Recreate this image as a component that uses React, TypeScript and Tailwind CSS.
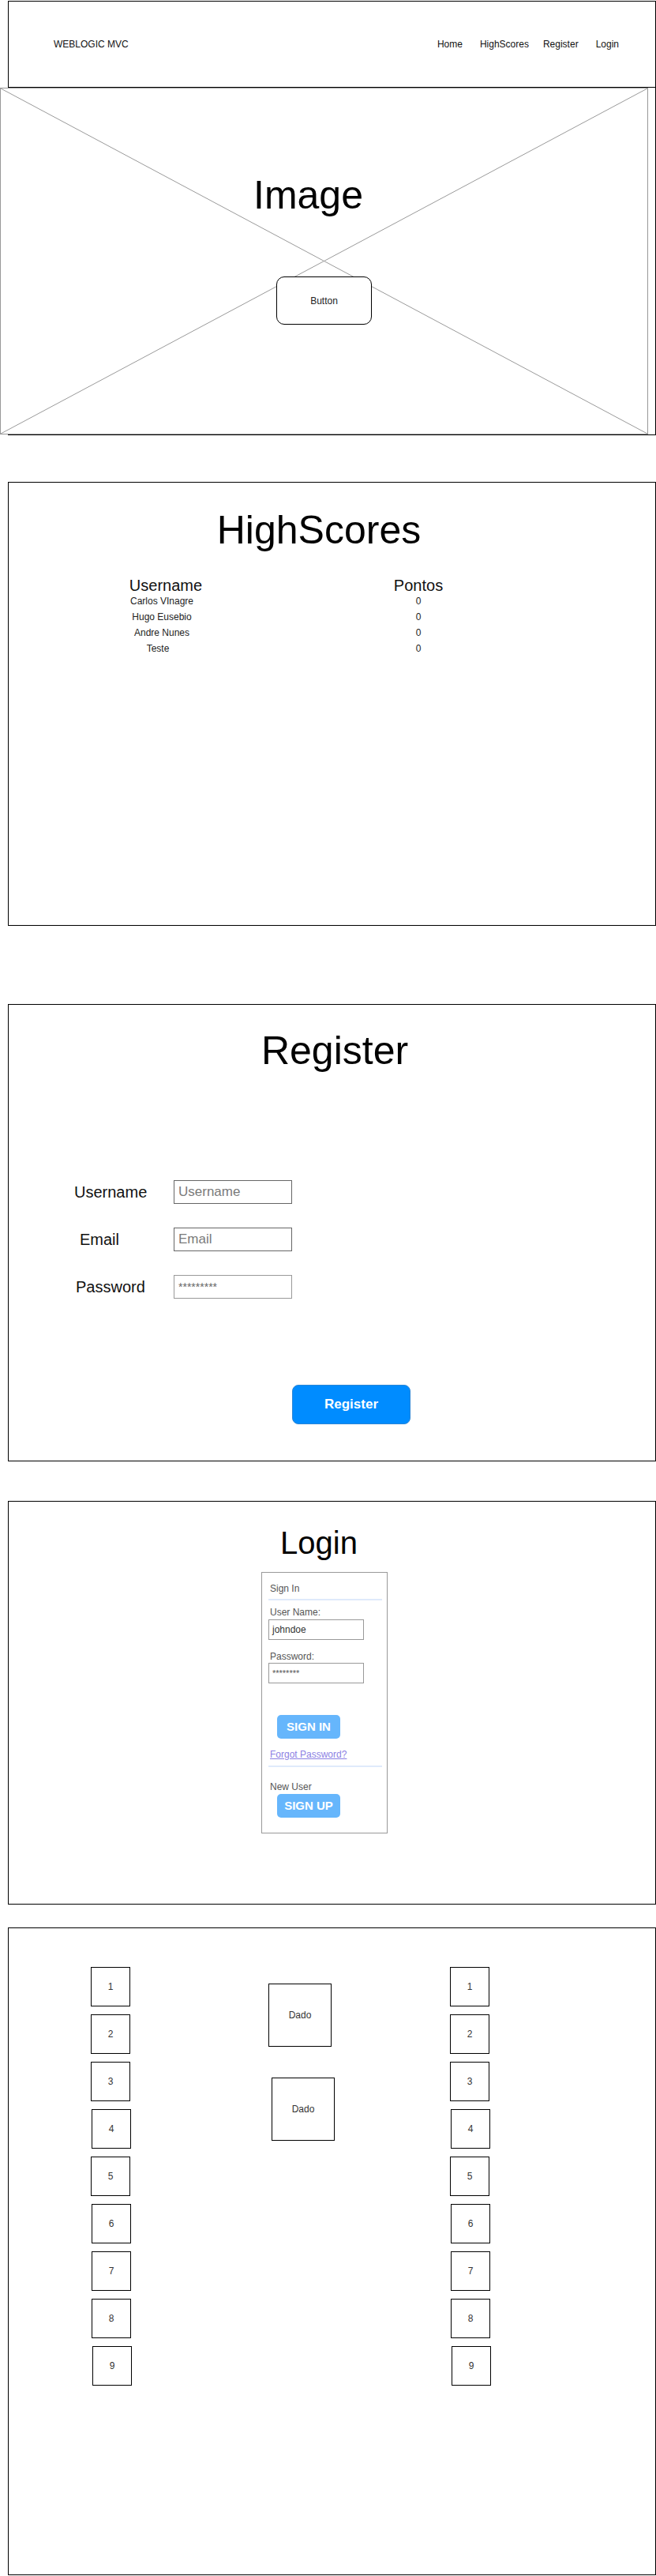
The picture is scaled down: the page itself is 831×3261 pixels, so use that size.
import React from "react";

const nums = [1, 2, 3, 4, 5, 6, 7, 8, 9];
const offs = ["", "", "", "ml-[1px]", "", "ml-[1px]", "ml-[1px]", "ml-[1px]", "ml-[2px]"];

function Column() {
  return (
    <div className="w-[50px] shrink-0 flex flex-col gap-[10px]">
      {nums.map((n, i) => (
        <div
          key={n}
          className={`w-[50px] h-[50px] shrink-0 border border-black flex items-center justify-center text-[12px] text-[#333] ${offs[i]}`}
        >
          {n}
        </div>
      ))}
    </div>
  );
}

export default function App() {
  const rows = [
    { name: "Carlos VInagre", cls: "" },
    { name: "Hugo Eusebio", cls: "" },
    { name: "Andre Nunes", cls: "" },
    { name: "Teste", cls: "pr-[10px]" },
  ];
  return (
    <div className="w-[831px] h-[3261px] bg-white text-black font-['Liberation_Sans',Arial,sans-serif]">
      {/* Header + hero */}
      <div className="mt-px ml-[10px] w-[821px] h-[550px] border border-black flex flex-col">
        <header className="h-[109px] shrink-0 border-b border-black flex items-center text-[12px] text-[#111]">
          <span className="ml-[57px]">WEBLOGIC MVC</span>
          <nav className="ml-auto mr-[46px] flex">
            <span>Home</span>
            <span className="ml-[22px]">HighScores</span>
            <span className="ml-[18px]">Register</span>
            <span className="ml-[22px]">Login</span>
          </nav>
        </header>
        <div className="relative -ml-[11px] w-[821px] h-[439px] shrink-0 border border-[#999] bg-white flex flex-col items-center">
          <svg
            className="absolute inset-0 w-full h-full"
            viewBox="0 0 819 437"
            preserveAspectRatio="none"
          >
            <line x1="0" y1="0" x2="819" y2="437" stroke="#9a9a9a" strokeWidth="1" vectorEffect="non-scaling-stroke" />
            <line x1="819" y1="0" x2="0" y2="437" stroke="#9a9a9a" strokeWidth="1" vectorEffect="non-scaling-stroke" />
          </svg>
          <div className="relative self-stretch mt-[110px] pr-[40px] text-center text-[50px] leading-[50px]">
            Image
          </div>
          <div className="relative mt-[78px] w-[121px] h-[61px] rounded-[10px] border border-black bg-white flex items-center justify-center text-[12px] text-[#222]">
            Button
          </div>
        </div>
      </div>

      {/* HighScores */}
      <div className="mt-[59px] ml-[10px] w-[821px] h-[562px] border border-black">
        <div className="mt-[35px] pr-[33px] text-center text-[50px] leading-[50px]">HighScores</div>
        <div className="mt-[35px] ml-[114px] grid grid-cols-[160px_160px] gap-x-[165px]">
          <div className="pl-[10px] text-center text-[20px] leading-[20px] text-[#111]">Username</div>
          <div className="text-center text-[20px] leading-[20px] text-[#111]">Pontos</div>
          {rows.map((r) => (
            <React.Fragment key={r.name}>
              <div className={`text-center text-[12px] leading-[20px] text-[#222] ${r.cls}`}>{r.name}</div>
              <div className="text-center text-[12px] leading-[20px] text-[#222]">0</div>
            </React.Fragment>
          ))}
        </div>
      </div>

      {/* Register */}
      <div className="mt-[99px] ml-[10px] w-[821px] h-[579px] border border-black">
        <div className="mt-[33px] pl-[7px] text-center text-[50px] leading-[50px]">Register</div>
        <div className="mt-[139px] flex flex-col gap-[30px]">
          <div className="flex items-center h-[30px]">
            <div className="w-[209px] pl-[83px] text-[20px] leading-none text-[#111]">Username</div>
            <div className="w-[150px] h-[30px] border border-[#666] px-[5px] flex items-center text-[17px] text-[#7a7a7a]">
              Username
            </div>
          </div>
          <div className="flex items-center h-[30px]">
            <div className="w-[209px] pl-[90px] text-[20px] leading-none text-[#111]">Email</div>
            <div className="w-[150px] h-[30px] border border-[#666] px-[5px] flex items-center text-[17px] text-[#7a7a7a]">
              Email
            </div>
          </div>
          <div className="flex items-center h-[30px]">
            <div className="w-[209px] pl-[85px] text-[20px] leading-none text-[#111]">Password</div>
            <div className="w-[150px] h-[30px] border border-[#999] px-[5px] flex items-center text-[14px] text-[#666]">
              *********
            </div>
          </div>
        </div>
        <div className="mt-[109px] ml-[359px] w-[150px] h-[50px] rounded-[8px] bg-[#008cff] border border-[#2b86d6] flex items-center justify-center text-white font-bold text-[17px]">
          Register
        </div>
      </div>

      {/* Login */}
      <div className="mt-[50px] ml-[10px] w-[821px] h-[511px] border border-black">
        <div className="mt-[32px] pr-[33px] text-center text-[40px] leading-[40px]">Login</div>
        <div className="mt-[17px] ml-[320px] w-[160px] h-[331px] border border-[#999] flex flex-col text-[12px] text-[#555]">
          <div className="mt-[13px] pl-[10px] leading-[14px]">Sign In</div>
          <div className="mt-[6px] ml-[8px] w-[144px] h-[2px] bg-[#dfeafb]" />
          <div className="mt-[8px] pl-[10px] leading-[14px]">User Name:</div>
          <div className="mt-[2px] ml-[8px] w-[121px] h-[26px] border border-[#999] pl-[4px] flex items-center text-[12px] text-[#333]">
            johndoe
          </div>
          <div className="mt-[14px] pl-[10px] leading-[14px]">Password:</div>
          <div className="mt-px ml-[8px] w-[121px] h-[26px] border border-[#999] pl-[4px] flex items-center text-[11px] text-[#555]">
            ********
          </div>
          <div className="mt-[40px] ml-[19px] w-[80px] h-[30px] rounded-[5px] bg-[#66b6fc] flex items-center justify-center text-white font-bold text-[15px]">
            SIGN IN
          </div>
          <div className="mt-[13px] pl-[10px] leading-[14px] text-[#8b7fe3] underline">Forgot Password?</div>
          <div className="mt-[7px] ml-[8px] w-[144px] h-[2px] bg-[#dfeafb]" />
          <div className="mt-[18px] pl-[10px] leading-[14px]">New User</div>
          <div className="mt-[2px] ml-[19px] w-[80px] h-[30px] rounded-[5px] bg-[#66b6fc] flex items-center justify-center text-white font-bold text-[15px]">
            SIGN UP
          </div>
        </div>
      </div>

      {/* Board */}
      <div className="mt-[29px] ml-[10px] w-[821px] h-[820px] border border-black flex items-start pt-[49px]">
        <div className="ml-[104px]">
          <Column />
        </div>
        <div className="ml-[175px] w-[84px] shrink-0 flex flex-col items-start">
          <div className="mt-[21px] w-[80px] h-[80px] border border-black flex items-center justify-center text-[12px] text-[#333]">
            Dado
          </div>
          <div className="mt-[39px] ml-[4px] w-[80px] h-[80px] border border-black flex items-center justify-center text-[12px] text-[#333]">
            Dado
          </div>
        </div>
        <div className="ml-[146px]">
          <Column />
        </div>
      </div>
    </div>
  );
}
